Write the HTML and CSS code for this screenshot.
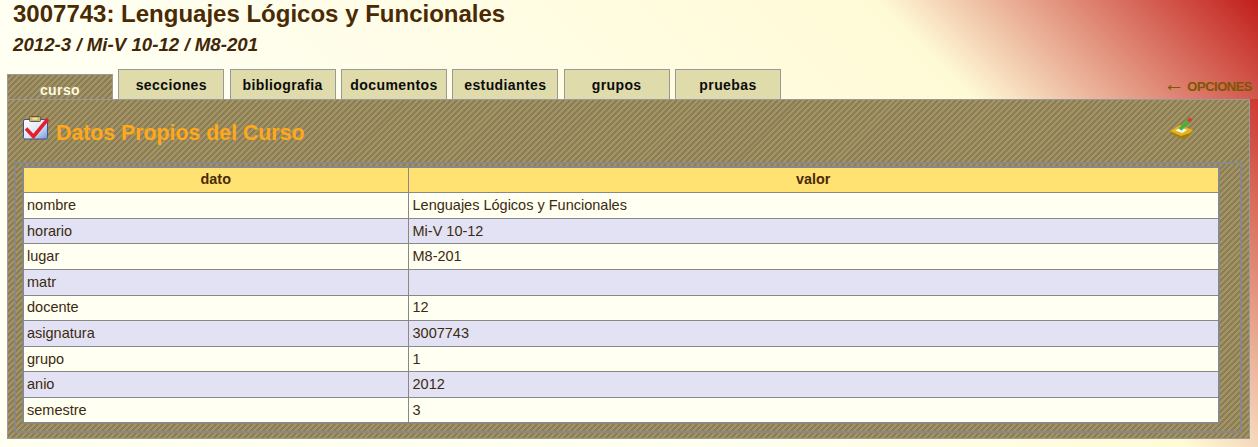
FILE: index.html
```html
<!DOCTYPE html>
<html>
  <head>
    <title>Datos Propios del Curso</title>
    <link rel="stylesheet" href="styles.css">
  </head>
  <body>
    <div class="header">
      <h1>3007743: Lenguajes Lógicos y Funcionales</h1>
      <h2>2012-3 / Mi-V 10-12 / M8-201</h2>
      <div class="tabs">
        <a class="tab active">curso</a>
        <a class="tab">secciones</a>
        <a class="tab">bibliografia</a>
        <a class="tab">documentos</a>
        <a class="tab">estudiantes</a>
        <a class="tab">grupos</a>
        <a class="tab">pruebas</a>
        <a class="options"><span class="arrow">&larr;</span> OPCIONES</a>
      </div>
    </div>

    <div class="panel">
      <div class="panel-head">
        <svg class="icon-check" width="26" height="24" viewBox="0 0 26 24">
          <defs>
            <linearGradient id="board" x1="0" y1="0" x2="1" y2="1">
              <stop offset="0" stop-color="#ffffff"/>
              <stop offset="0.55" stop-color="#dce7fa"/>
              <stop offset="1" stop-color="#6f93d8"/>
            </linearGradient>
          </defs>
          <rect x="0.5" y="3.5" width="24" height="19.5" rx="1.5" fill="url(#board)" stroke="#3d5488"/>
          <rect x="6.5" y="0.5" width="11" height="5" rx="1" fill="#c9b27a" stroke="#6b5a2c"/>
          <rect x="9.5" y="2" width="5" height="1.6" fill="#f3e6bd"/>
          <path d="M3 12.5l7.5 8L25 3" fill="none" stroke="#e3202a" stroke-width="3.6"/>
        </svg>
        <h3>Datos Propios del Curso</h3>
        <svg class="icon-edit" width="25" height="24" viewBox="0 0 25 24">
          <path d="M1 15l10-6 13 5-5 7-6 2-10-5z" fill="#a87c08"/>
          <path d="M1 15l10-6 13 5-3 3-9 3-9-4z" fill="#e2b422"/>
          <path d="M6 14.500l6-3 6 2.500-4.500 3z" fill="#f8f8f2"/>
          <path d="M11 13.500l9-8.500" stroke="#3fb53a" stroke-width="3.600"/>
          <path d="M19.500 5.500l2.500-3" stroke="#d83a2e" stroke-width="3.600"/>
        </svg>
      </div>

      <div class="box">
        <table class="data">
          <thead>
            <tr><th class="col-dato">dato</th><th>valor</th></tr>
          </thead>
          <tbody>
            <tr><td>nombre</td><td>Lenguajes Lógicos y Funcionales</td></tr>
            <tr><td>horario</td><td>Mi-V 10-12</td></tr>
            <tr><td>lugar</td><td>M8-201</td></tr>
            <tr><td>matr</td><td></td></tr>
            <tr><td>docente</td><td>12</td></tr>
            <tr><td>asignatura</td><td>3007743</td></tr>
            <tr><td>grupo</td><td>1</td></tr>
            <tr><td>anio</td><td>2012</td></tr>
            <tr><td>semestre</td><td>3</td></tr>
          </tbody>
        </table>
      </div>
    </div>
  </body>
</html>
```

FILE: styles.css
```css
html,
body {
  height: 100%;
}
body {
  margin: 0;
  overflow: hidden;
  font-family: "Liberation Sans", Arial, sans-serif;
  color: #3c2a10;
  background: linear-gradient(225deg, #c00d0d 0, #fffbd8 368px, #fffff2 700px);
}
.header {
  height: 99px;
  box-sizing: border-box;
  padding: 0 0 0 7px;
  background: linear-gradient(225deg, #c21f1c 0, #fffad6 270px, #fffff2 850px);
  display: flex;
  flex-direction: column;
}
h1 {
  margin: 0 0 0 6px;
  font-size: 24px;
  line-height: 28px;
  color: #4a2a05;
}
h2 {
  margin: 6px 0 0 6px;
  font-size: 18.7px;
  line-height: 21px;
  font-style: italic;
  color: #3f2708;
}
.tabs {
  margin-top: auto;
  display: flex;
  align-items: flex-end;
  gap: 5.33px;
}
.tab {
  width: 106px;
  height: 30px;
  box-sizing: border-box;
  border: 1px solid #999;
  border-bottom: none;
  background: #dfdbab;
  color: #0c0c0c;
  font-size: 14px;
  font-weight: bold;
  line-height: 30px;
  text-align: center;
  letter-spacing: 0.4px;
}
.tab.active {
  height: 25px;
  line-height: 30px;
  color: #fffbe0;
  background: repeating-linear-gradient(-45deg, #8b7e55 0, #8b7e55 2.1px, #a39365 2.1px, #a39365 4.2px);
}
.options {
  margin-left: auto;
  margin-right: 6px;
  padding-bottom: 5px;
  font-size: 13px;
  font-weight: bold;
  letter-spacing: -0.5px;
  color: #7a5800;
}
.arrow {
  font-size: 21px;
  font-weight: normal;
  line-height: 13px;
}
.panel {
  width: 1243px;
  height: 340px;
  margin-left: 7px;
  box-sizing: border-box;
  border: 1px solid #999;
  padding: 0 7px 0 6px;
  background: repeating-linear-gradient(-45deg, #8b7e55 0, #8b7e55 2.1px, #a39365 2.1px, #a39365 4.2px);
}
.panel-head {
  height: 62px;
  display: flex;
  align-items: flex-start;
  padding: 16px 48px 0 9px;
  box-sizing: border-box;
}
.icon-check {
  margin-right: 7px;
}
.panel-head h3 {
  margin: 5px 0 0;
  font-size: 21.3px;
  line-height: 24px;
  color: #ffa81a;
}
.icon-edit {
  margin-left: auto;
}
.box {
  height: 271px;
  box-sizing: border-box;
  border: 2px solid #888;
  padding: 2px 0 0 6px;
}
.data {
  width: 1198px;
  table-layout: fixed;
  border-collapse: collapse;
  border: 2px solid #888;
  font-size: 14.5px;
  background: #fffff2;
}
.col-dato {
  width: 385px;
}
th,
td {
  height: 25.62px;
  box-sizing: border-box;
  padding: 0 3px 1px;
  border: 1px solid #888;
  text-align: left;
}
td + td {
  padding-left: 4px;
}
th {
  padding-bottom: 2px;
  font-size: 14.4px;
  background: #ffe272;
  color: #4a2a05;
  text-align: center;
}
tbody tr:nth-child(even) {
  background: #e2e2f4;
}
```
